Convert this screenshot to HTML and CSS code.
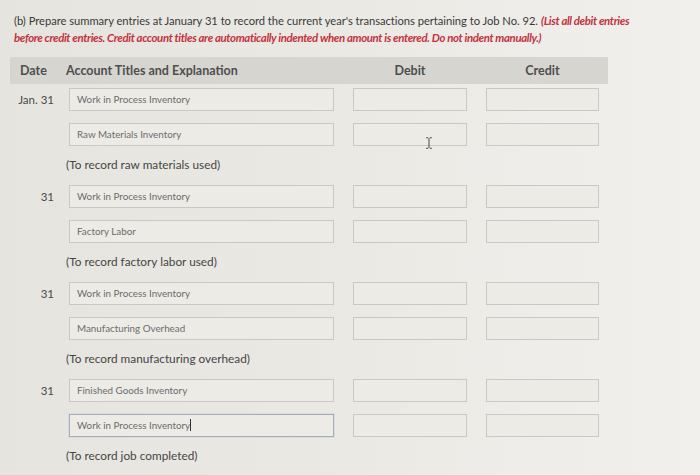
FILE: index.html
```html
<!DOCTYPE html>
<html>
<head>
<meta charset="utf-8">
<link rel="stylesheet" href="styles.css">
</head>
<body>
<div class="page">
  <div class="prompt">
    <div class="line"><span class="lead">(b) Prepare summary entries at January 31 to record the current year's transactions pertaining to Job No. 92.</span><span class="note">(List all debit entries</span></div>
    <div class="line note">before credit entries. Credit account titles are automatically indented when amount is entered. Do not indent manually.)</div>
  </div>

  <div class="journal">
    <div class="head">
      <div class="h-date">Date</div>
      <div class="h-acct">Account Titles and Explanation</div>
      <div class="h-num">Debit</div>
      <div class="h-num">Credit</div>
    </div>

    <div class="group">
      <div class="row">
        <div class="date">Jan. 31</div>
        <div class="box acct">Work in Process Inventory</div>
        <div class="box"></div>
        <div class="box"></div>
      </div>
      <div class="row">
        <div class="date"></div>
        <div class="box acct">Raw Materials Inventory</div>
        <div class="box cursor-host"><svg class="ibeam" width="8" height="12" viewBox="0 0 8 12"><path d="M1 0.8h2.2M4.8 0.8H7M4 1v10M1 11.2h2.2M4.8 11.2H7" stroke="#555" stroke-width="1.1" fill="none"/></svg></div>
        <div class="box"></div>
      </div>
      <div class="expl">(To record raw materials used)</div>
    </div>

    <div class="group">
      <div class="row">
        <div class="date">31</div>
        <div class="box acct">Work in Process Inventory</div>
        <div class="box"></div>
        <div class="box"></div>
      </div>
      <div class="row">
        <div class="date"></div>
        <div class="box acct">Factory Labor</div>
        <div class="box"></div>
        <div class="box"></div>
      </div>
      <div class="expl">(To record factory labor used)</div>
    </div>

    <div class="group">
      <div class="row">
        <div class="date">31</div>
        <div class="box acct">Work in Process Inventory</div>
        <div class="box"></div>
        <div class="box"></div>
      </div>
      <div class="row">
        <div class="date"></div>
        <div class="box acct">Manufacturing Overhead</div>
        <div class="box"></div>
        <div class="box"></div>
      </div>
      <div class="expl">(To record manufacturing overhead)</div>
    </div>

    <div class="group">
      <div class="row">
        <div class="date">31</div>
        <div class="box acct">Finished Goods Inventory</div>
        <div class="box"></div>
        <div class="box"></div>
      </div>
      <div class="row">
        <div class="date"></div>
        <div class="box acct focus">Work in Process Inventory<span class="caret"></span></div>
        <div class="box"></div>
        <div class="box"></div>
      </div>
      <div class="expl">(To record job completed)</div>
    </div>
  </div>
</div>
</body>
</html>
```

FILE: styles.css
```css
html, body {
  margin: 0;
  padding: 0;
}
body {
  width: 700px;
  height: 475px;
  overflow: hidden;
  background: linear-gradient(90deg, #e6e4de 0%, #ebe9e4 50%, #efeeea 85%, #f1f0ed 100%);
  font-family: Lato, "Open Sans", sans-serif;
  color: #3c3c3c;
}
.page {
  padding-top: 12px;
}
.prompt {
  margin-left: 14px;
  height: 34px;
}
.line {
  display: flex;
  gap: 3px;
  height: 17px;
  line-height: 17px;
  white-space: nowrap;
}
.lead {
  font-size: 11.2px;
  letter-spacing: -0.03px;
  color: #3a3a3a;
}
.note {
  font-size: 11.4px;
  color: #c4323f;
  font-weight: 700;
  font-style: italic;
  letter-spacing: -0.36px;
}
.journal {
  margin: 11px 0 0 10px;
  width: 598px;
}
.head {
  display: grid;
  grid-template-columns: 56px 287px 114px 19px 113px;
  height: 27px;
  align-items: center;
  background: #d6d5d0;
  font-weight: 700;
  font-size: 12.5px;
  color: #4e4e4e;
}
.h-date { padding-left: 10px; }
.head .h-num:nth-child(3) { text-align: center; }
.head .h-num:nth-child(4) { grid-column: 5; text-align: center; }
.group {
  padding-top: 4px;
  margin-bottom: -4px;
}
.row {
  display: grid;
  grid-template-columns: 59px 265px 19px 114px 19px 113px;
  height: 23px;
  margin-bottom: 12px;
}
.row > :nth-child(2) { grid-column: 2; }
.row > :nth-child(3) { grid-column: 4; }
.row > :nth-child(4) { grid-column: 6; }
.row + .row { margin-bottom: 0; }
.date {
  text-align: right;
  padding-right: 15px;
  font-size: 11.5px;
  line-height: 23px;
  color: #4a4a4a;
}
.box {
  box-sizing: border-box;
  border: 1px solid #c9c8c3;
  background: #ecebe6;
  height: 23px;
}
.acct {
  font-size: 9.8px;
  line-height: 21px;
  padding-left: 7px;
  color: #6c6c6c;
  white-space: nowrap;
}
.focus {
  border-color: #a7adb5;
  box-shadow: 0 0 0 1px #d8dbe0;
}
.caret {
  display: inline-block;
  width: 1px;
  height: 12px;
  background: #333;
  vertical-align: -2px;
}
.cursor-host {
  position: relative;
}
.ibeam {
  position: absolute;
  left: 71px;
  top: 13px;
}
.expl {
  height: 39px;
  box-sizing: border-box;
  padding: 10px 0 0 56px;
  line-height: 18px;
  font-size: 11.8px;
  color: #454545;
}
```
